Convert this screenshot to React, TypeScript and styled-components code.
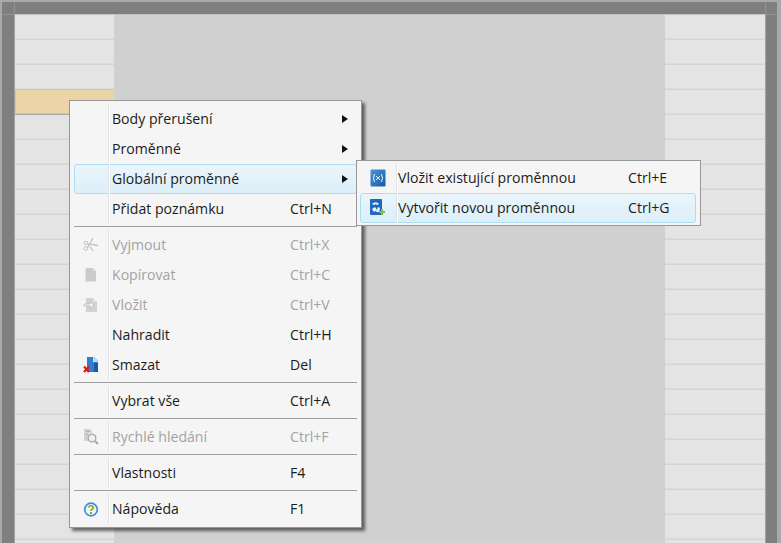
import React from "react";
import styled, { createGlobalStyle } from "styled-components";

const GlobalStyle = createGlobalStyle`
  html, body {
    margin: 0;
    padding: 0;
    overflow: hidden;
  }
`;

const Page = styled.div`
  position: relative;
  width: 781px;
  height: 543px;
  box-sizing: border-box;
  padding: 2px 4px 0 2px;
  background: #a9a9a9;
  overflow: hidden;
  font-family: "Open Sans", "Noto Sans", sans-serif;
  font-size: 14.1px;
`;

const TopBar = styled.div`
  display: grid;
  grid-template-columns: 13px 1fr 12px;
  height: 12px;
  background: #7f7f7f;
`;

const TopCorner = styled.div<{ $right?: boolean }>`
  ${(p) => (p.$right ? "border-left" : "border-right")}: 1px solid #939393;
`;

const Columns = styled.div`
  display: grid;
  grid-template-columns: 13px 99px 551px 100px 12px;
  height: 529px;
`;

const Gutter = styled.div<{ $right?: boolean }>`
  background: #7f7f7f;
  border-top: 1px solid #939393;
  ${(p) => (p.$right ? "border-left" : "border-right")}: 1px solid #a2a2a2;
`;

const RowColumn = styled.div<{ $clip?: boolean }>`
  display: flex;
  flex-direction: column;
  border-top: 1px solid #c2c2c2;
  overflow: ${(p) => (p.$clip ? "hidden" : "visible")};
`;

const Row = styled.div`
  flex: 0 0 25px;
  box-sizing: border-box;
  background: #e4e4e4;
  border-bottom: 1px solid #d4d4d4;
  box-shadow: inset 0 -1px 0 #dcdcdc;
`;

const SelectedRow = styled.div`
  flex: 0 0 25px;
  box-sizing: border-box;
  width: 100px;
  margin: -1px 0 1px;
  background: #ebd5a8;
  border: 1px solid #f0c062;
`;

const Center = styled.div`
  background: #d0d0d0;
  border-top: 1px solid #c2c2c2;
`;

const Menu = styled.div`
  position: absolute;
  left: 69px;
  top: 100px;
  width: 293px;
  box-sizing: border-box;
  padding: 3px 4px 3px;
  background: #f5f5f5;
  border: 1px solid #979797;
  box-shadow: 3px 3px 3px rgba(0, 0, 0, 0.55);
`;

const SubMenu = styled.div`
  position: absolute;
  left: 356px;
  top: 160px;
  width: 345px;
  box-sizing: border-box;
  padding: 2px 4px 2px 3px;
  background: #f5f5f5;
  border: 1px solid #979797;
`;

const Item = styled.div<{ $active?: boolean; $disabled?: boolean }>`
  display: flex;
  align-items: center;
  height: 30px;
  box-sizing: border-box;
  border: 1px solid ${(p) => (p.$active ? "#aedcf3" : "transparent")};
  border-radius: 3px;
  background: ${(p) =>
    p.$active ? "linear-gradient(#eaf5fb, #dceff9)" : "transparent"};
  color: ${(p) => (p.$disabled ? "#a3a3a3" : "#1c1c1c")};
`;

const IconCell = styled.div<{ $width: number }>`
  flex: 0 0 ${(p) => p.$width}px;
  align-self: stretch;
  display: flex;
  align-items: center;
  justify-content: center;
  margin-left: -1px;
`;

const IconRule = styled.div`
  flex: 0 0 1px;
  align-self: stretch;
  margin: -1px 0;
  background: #e2e2e2;
  box-shadow: 1px 0 0 #fff;
`;

const Label = styled.span<{ $width: number; $indent: number }>`
  flex: 0 0 ${(p) => p.$width}px;
  padding-left: ${(p) => p.$indent}px;
  margin-top: -1px;
  box-sizing: border-box;
  white-space: nowrap;
`;

const Shortcut = styled.span`
  margin-top: -1px;
  white-space: nowrap;
`;

const Arrow = styled.span`
  margin-left: auto;
  margin-right: 8px;
  width: 0;
  height: 0;
  border-left: 6px solid #111;
  border-top: 4px solid transparent;
  border-bottom: 4px solid transparent;
`;

const Separator = styled.div`
  height: 1px;
  margin: 2px 0 3px;
  background: #a0a0a0;
`;

const ScissorsIcon = () => (
  <svg width="16" height="16" viewBox="0 0 16 16" fill="none" stroke="#c2c2c2">
    <circle cx="2.800" cy="6" r="1.800" />
    <circle cx="2.800" cy="11.500" r="1.800" />
    <path d="M4.500 6.800 15 8.500M4.500 10.700 10 1" strokeWidth="1.300" />
    <path d="M7 9.500 10 14" strokeWidth="1.300" />
  </svg>
);

const CopyIcon = () => (
  <svg width="16" height="16" viewBox="0 0 16 16">
    <path d="M2 2h1v12h9v1H2z" fill="#dedede" />
    <path d="M3 1h7l3 3v10H3z" fill="#cacaca" />
    <path d="M10 1l3 3h-3z" fill="#e4e4e4" />
  </svg>
);

const PasteIcon = () => (
  <svg width="16" height="16" viewBox="0 0 16 16">
    <path d="M3 1h7l4 4v10H3z" fill="#d2d2d2" />
    <path d="M10 1l4 4h-4z" fill="#e6e6e6" />
    <path d="M1 7h6V4.500L11 8l-4 3.500V9H1z" fill="#f2f2f2" stroke="#b8b8b8" strokeWidth=".7" />
  </svg>
);

const DeleteIcon = () => (
  <svg width="18" height="18" viewBox="0 0 18 18">
    <path d="M5 1h7l4 4v11H5z" fill="#2f7ed2" />
    <path d="M11 1h1l4 4v1h-5z" fill="#bcdcf6" />
    <path d="M12 7h4v9h-4z" fill="#175aa8" />
    <path d="M2 10.500l5 5.500M7 10.500l-5 5.500" stroke="#d81818" strokeWidth="2" />
  </svg>
);

const SearchIcon = () => (
  <svg width="18" height="18" viewBox="0 0 18 18" fill="none">
    <path d="M2 1h6l2 2v2H7v8H2z" fill="#d2d2d2" />
    <path d="M4 3h4v1H4zM4 6h2v1H4z" fill="#b0b0b0" />
    <circle cx="10" cy="10" r="3.800" stroke="#acacac" strokeWidth="1.400" fill="#f0f0f0" />
    <path d="M13 13l3 3" stroke="#a8a8a8" strokeWidth="2" />
  </svg>
);

const HelpIcon = () => (
  <svg width="16" height="16" viewBox="0 0 16 16">
    <circle cx="8" cy="8.500" r="6.300" fill="#eef6fd" stroke="#3f8fdc" strokeWidth="1.700" />
    <path d="M5.800 6.600C5.800 4.100 10.200 4.100 10.200 6.600 10.200 8.200 8 8.200 8 10" fill="none" stroke="#8fa800" strokeWidth="1.700" />
    <path d="M7 11h2v2H7z" fill="#8fa800" />
  </svg>
);

const VariableIcon = () => (
  <svg width="16" height="18" viewBox="0 0 16 18">
    <defs>
      <linearGradient id="varBlue" x1="0" y1="0" x2="1" y2="1">
        <stop offset="0" stopColor="#4a94dc" />
        <stop offset="1" stopColor="#175aa8" />
      </linearGradient>
    </defs>
    <rect x="0.500" y="0.500" width="15" height="17" rx="1" fill="url(#varBlue)" />
    <path d="M4.500 5Q2.500 9 4.500 13M11.500 5Q13.500 9 11.500 13" stroke="#e4effa" fill="none" />
    <path d="M6 7l4 4M10 7l-4 4" stroke="#e4effa" />
  </svg>
);

const NewVariableIcon = () => (
  <svg width="18" height="18" viewBox="0 0 18 18">
    <rect x="1" y="0" width="12" height="16" rx="1" fill="#1f69bd" />
    <path d="M3 5c1-2 6-2 7 0l-2 1c-1-1-2-1-3 0zM3 10l3-2 2 3-3 2zM9 8l2 1-1 4H7z" fill="#f0f6fc" />
    <path d="M12 10h2v2h2v2h-2v2h-2v-2h-2v-2h2z" fill="#8ab84a" />
  </svg>
);

type Entry = {
  label: string;
  shortcut?: string;
  icon?: React.ReactNode;
  disabled?: boolean;
  active?: boolean;
  submenu?: boolean;
};

type Metrics = { cell: number; indent: number; label: number };

const mainMetrics: Metrics = { cell: 34, indent: 3, label: 181 };
const subMetrics: Metrics = { cell: 36, indent: 1, label: 231 };

const groups: Entry[][] = [
  [
    { label: "Body přerušení", submenu: true },
    { label: "Proměnné", submenu: true },
    { label: "Globální proměnné", submenu: true, active: true },
    { label: "Přidat poznámku", shortcut: "Ctrl+N" },
  ],
  [
    { label: "Vyjmout", shortcut: "Ctrl+X", icon: <ScissorsIcon />, disabled: true },
    { label: "Kopírovat", shortcut: "Ctrl+C", icon: <CopyIcon />, disabled: true },
    { label: "Vložit", shortcut: "Ctrl+V", icon: <PasteIcon />, disabled: true },
    { label: "Nahradit", shortcut: "Ctrl+H" },
    { label: "Smazat", shortcut: "Del", icon: <DeleteIcon /> },
  ],
  [{ label: "Vybrat vše", shortcut: "Ctrl+A" }],
  [{ label: "Rychlé hledání", shortcut: "Ctrl+F", icon: <SearchIcon />, disabled: true }],
  [{ label: "Vlastnosti", shortcut: "F4" }],
  [{ label: "Nápověda", shortcut: "F1", icon: <HelpIcon /> }],
];

const subEntries: Entry[] = [
  { label: "Vložit existující proměnnou", shortcut: "Ctrl+E", icon: <VariableIcon /> },
  { label: "Vytvořit novou proměnnou", shortcut: "Ctrl+G", icon: <NewVariableIcon />, active: true },
];

const rowCount = 22;

const MenuItem = ({ entry, metrics }: { entry: Entry; metrics: Metrics }) => (
  <Item $active={entry.active} $disabled={entry.disabled}>
    <IconCell $width={metrics.cell}>{entry.icon}</IconCell>
    <IconRule />
    <Label $width={metrics.label} $indent={metrics.indent}>
      {entry.label}
    </Label>
    {entry.shortcut && <Shortcut>{entry.shortcut}</Shortcut>}
    {entry.submenu && <Arrow />}
  </Item>
);

const App = (): JSX.Element => {
  const rows = (selectedIndex: number) =>
    Array.from({ length: rowCount }, (_, i) =>
      i === selectedIndex ? <SelectedRow key={i} /> : <Row key={i} />
    );

  return (
    <Page>
      <GlobalStyle />
      <TopBar>
        <TopCorner />
        <div />
        <TopCorner $right />
      </TopBar>
      <Columns>
        <Gutter />
        <RowColumn>{rows(3)}</RowColumn>
        <Center />
        <RowColumn $clip>{rows(-1)}</RowColumn>
        <Gutter $right />
      </Columns>
      <Menu>
        {groups.map((group, g) => (
          <React.Fragment key={g}>
            {g > 0 && <Separator />}
            {group.map((entry) => (
              <MenuItem key={entry.label} entry={entry} metrics={mainMetrics} />
            ))}
          </React.Fragment>
        ))}
      </Menu>
      <SubMenu>
        {subEntries.map((entry) => (
          <MenuItem key={entry.label} entry={entry} metrics={subMetrics} />
        ))}
      </SubMenu>
    </Page>
  );
};

export default App;
